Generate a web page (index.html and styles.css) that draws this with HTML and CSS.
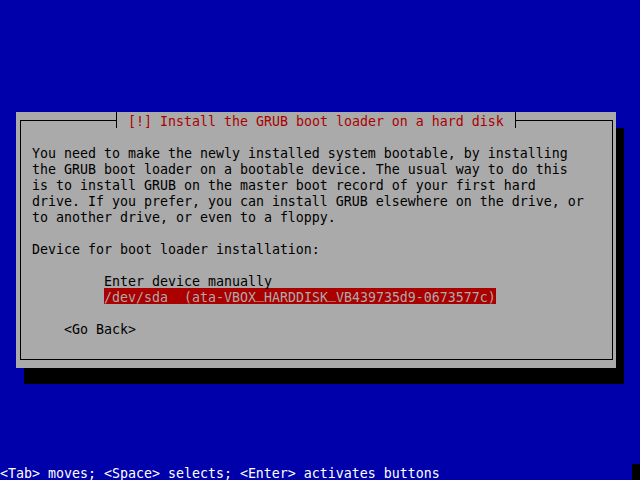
FILE: index.html
```html
<!DOCTYPE html>
<html lang="en">
<head>
    <meta charset="UTF-8">
    <meta name="viewport" content="width=device-width, initial-scale=1.0">
    <title>Install the GRUB boot loader</title>
    <link rel="stylesheet" href="styles.css">
</head>
<body>
    <div class="screen">
        <div class="dialog">
            <div class="frame">
                <div class="title-row">
                    <div class="ln title">[!] Install the GRUB boot loader on a hard disk</div>
                </div>
                <div class="content">
                    <div class="ln">You need to make the newly installed system bootable, by installing</div>
                    <div class="ln">the GRUB boot loader on a bootable device. The usual way to do this</div>
                    <div class="ln">is to install GRUB on the master boot record of your first hard</div>
                    <div class="ln">drive. If you prefer, you can install GRUB elsewhere on the drive, or</div>
                    <div class="ln">to another drive, or even to a floppy.</div>
                    <div class="ln"></div>
                    <div class="ln">Device for boot loader installation:</div>
                    <div class="ln"></div>
                    <div class="list">
                        <div class="ln">Enter device manually</div>
                        <div class="ln selected">/dev/sda  (ata-VBOX<span class="us">_</span>HARDDISK<span class="us">_</span>VB439735d9-0673577c)</div>
                    </div>
                    <div class="ln"></div>
                    <div class="buttons">
                        <div class="ln">&lt;Go Back&gt;</div>
                    </div>
                </div>
            </div>
        </div>

        <div class="status">
            <div class="ln">&lt;Tab&gt; moves; &lt;Space&gt; selects; &lt;Enter&gt; activates buttons</div>
            <div class="cursor"></div>
        </div>
    </div>
</body>
</html>
```

FILE: styles.css
```css
body {
    margin: 0;
    padding: 0;
    background-color: #0000aa;
    font-family: "DejaVu Sans Mono", "Liberation Mono", monospace;
    font-size: 13.29px;
}

.screen {
    width: 640px;
    height: 480px;
    display: flex;
    flex-direction: column;
    overflow: hidden;
}

/* one text row of the 80x30 console */
.ln {
    height: 16px;
    box-sizing: border-box;
    padding-top: 2px;
    line-height: 16px;
    white-space: pre;
}

.dialog {
    margin: 112px 0 0 16px;
    width: 600px;
    height: 256px;
    box-sizing: border-box;
    padding: 8px 3px 8px 4px;
    background-color: #aaaaaa;
    box-shadow: 8px 16px 0 #000;
    color: #000;
}

.frame {
    height: 240px;
    box-sizing: border-box;
    border: 1px solid #000;
}

.title-row {
    display: flex;
    margin-top: -9px;
}

.title {
    margin-left: 95px;
    padding: 2px 11px 0 11px;
    border-left: 1px solid #000;
    border-right: 1px solid #000;
    background-color: #aaaaaa;
    color: #aa0000;
}

.content {
    margin-top: 16px;
    padding-left: 11px;
}

.list {
    padding-left: 72px;
}

.selected {
    width: max-content;
    background-color: #aa0000;
    color: #aaaaaa;
}

/* console font keeps the underscore on the baseline */
.us {
    vertical-align: 4px;
    line-height: 0;
}

.buttons {
    padding-left: 32px;
}

.status {
    margin-top: auto;
    display: flex;
    color: #ffffff;
}

.cursor {
    margin-left: auto;
    width: 8px;
    height: 16px;
    background-color: #000;
}
```
